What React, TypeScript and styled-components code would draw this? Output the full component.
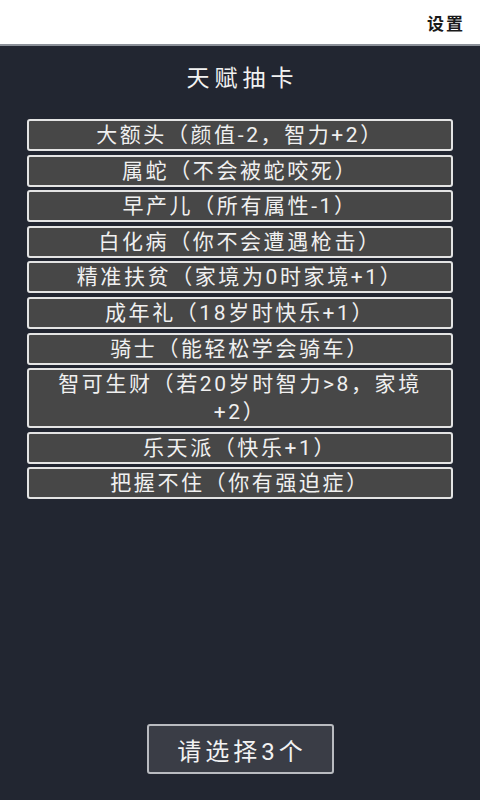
import React from "react";
import styled, { createGlobalStyle } from "styled-components";

const GlobalStyle = createGlobalStyle`
  html, body {
    margin: 0;
    padding: 0;
    height: 100%;
  }
  body {
    font-family: Roboto, "Noto Sans CJK SC", sans-serif;
    background-color: #222631;
  }
  #root {
    height: 100%;
  }
`;

const Page = styled.div`
  height: 800px;
  display: flex;
  flex-direction: column;
`;

const Header = styled.header`
  height: 44px;
  flex: 0 0 auto;
  background-color: #ffffff;
  border-bottom: 2px solid #8b9098;
  display: flex;
  align-items: center;
  justify-content: flex-end;
  padding: 0 15px;
`;

const SettingsBtn = styled.span`
  font-size: 17px;
  font-weight: 700;
  color: #1a1a1a;
  letter-spacing: 2px;
`;

const Main = styled.main`
  flex: 1;
  display: flex;
  flex-direction: column;
  align-items: center;
  padding: 0 27px 26px;
`;

const Title = styled.h1`
  margin: 14px 0 0;
  font-size: 23px;
  font-weight: 400;
  color: #f2f2f2;
  letter-spacing: 5px;
  line-height: 38px;
  padding-left: 5px;
`;

const CardList = styled.div`
  width: 100%;
  display: flex;
  flex-direction: column;
  gap: 3.6px;
  margin-top: 21px;
`;

const Card = styled.button`
  width: 100%;
  box-sizing: border-box;
  background-color: #474747;
  border: 2px solid #e4e4e4;
  border-radius: 3px;
  padding: 0 16px;
  font-family: inherit;
  font-size: 21px;
  line-height: 28px;
  letter-spacing: 2.6px;
  color: #f0f0f0;
  text-align: center;
  cursor: pointer;
`;

const PickButton = styled.button`
  margin-top: auto;
  width: 187px;
  height: 50px;
  background-color: #3a3d46;
  border: 2px solid #b9bbc0;
  border-radius: 3px;
  font-family: inherit;
  font-size: 24px;
  letter-spacing: 4px;
  padding-left: 10px;
  color: #f2f2f2;
  cursor: pointer;
`;

const talents = [
  "大额头（颜值-2，智力+2）",
  "属蛇（不会被蛇咬死）",
  "早产儿（所有属性-1）",
  "白化病（你不会遭遇枪击）",
  "精准扶贫（家境为0时家境+1）",
  "成年礼（18岁时快乐+1）",
  "骑士（能轻松学会骑车）",
  "智可生财（若20岁时智力>8，家境+2）",
  "乐天派（快乐+1）",
  "把握不住（你有强迫症）",
];

export default function App() {
  return (
    <Page>
      <GlobalStyle />
      <Header>
        <SettingsBtn>设置</SettingsBtn>
      </Header>
      <Main>
        <Title>天赋抽卡</Title>
        <CardList>
          {talents.map((t) => (
            <Card key={t}>{t}</Card>
          ))}
        </CardList>
        <PickButton>请选择3个</PickButton>
      </Main>
    </Page>
  );
}
